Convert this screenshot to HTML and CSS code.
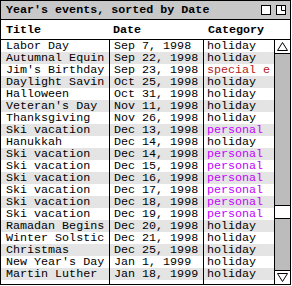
FILE: index.html
```html
<!DOCTYPE html>
<html lang="en">
<head>
  <meta charset="UTF-8" />
  <title>Year's events</title>
  <link rel="stylesheet" href="styles.css">
</head>
<body>

  <div class="window">
    <div class="title-bar">
      <span class="title-text">Year's events, sorted by Date</span>
      <div class="title-icons">
        <svg width="10" height="10" viewBox="0 0 10 10"><rect x="0.5" y="0.5" width="9" height="9" fill="#fff" stroke="#000"/></svg>
        <svg width="10" height="10" viewBox="0 0 10 10"><rect x="0.5" y="0.5" width="9" height="9" fill="#fff" stroke="#000"/><path d="M5.5 0.5V5.5H9.5" fill="none" stroke="#000"/></svg>
      </div>
    </div>

    <div class="header">
      <div class="hcell c-title">Title</div>
      <div class="hcell c-date">Date</div>
      <div class="hcell c-cat">Category</div>
    </div>

    <div class="body">
      <div class="list" id="list"></div>
      <div class="scrollbar">
        <div class="arrow up">
          <svg width="11" height="9" viewBox="0 0 11 9"><path d="M5.5 0.5L10.5 8.5H0.5Z" fill="none" stroke="#000"/></svg>
        </div>
        <div class="track">
          <div class="thumb"></div>
        </div>
        <div class="arrow down">
          <svg width="11" height="9" viewBox="0 0 11 9"><path d="M0.5 0.5H10.5L5.5 8.5Z" fill="none" stroke="#000"/></svg>
        </div>
      </div>
    </div>
  </div>

  <script>
    const events = [
      ["Labor Day", "Sep 7, 1998", "holiday"],
      ["Autumnal Equinox", "Sep 22, 1998", "holiday"],
      ["Jim's Birthday", "Sep 23, 1998", "special event"],
      ["Daylight Savings", "Oct 25, 1998", "holiday"],
      ["Halloween", "Oct 31, 1998", "holiday"],
      ["Veteran's Day", "Nov 11, 1998", "holiday"],
      ["Thanksgiving", "Nov 26, 1998", "holiday"],
      ["Ski vacation", "Dec 13, 1998", "personal"],
      ["Hanukkah", "Dec 14, 1998", "holiday"],
      ["Ski vacation", "Dec 14, 1998", "personal"],
      ["Ski vacation", "Dec 15, 1998", "personal"],
      ["Ski vacation", "Dec 16, 1998", "personal"],
      ["Ski vacation", "Dec 17, 1998", "personal"],
      ["Ski vacation", "Dec 18, 1998", "personal"],
      ["Ski vacation", "Dec 19, 1998", "personal"],
      ["Ramadan Begins", "Dec 20, 1998", "holiday"],
      ["Winter Solstice", "Dec 21, 1998", "holiday"],
      ["Christmas", "Dec 25, 1998", "holiday"],
      ["New Year's Day", "Jan 1, 1999", "holiday"],
      ["Martin Luther King Day", "Jan 18, 1999", "holiday"]
    ];

    // columns cut text to whole characters
    const TITLE_CHARS = 14;
    const CAT_CHARS = 9;

    const list = document.getElementById('list');

    events.forEach((ev, i) => {
      const row = document.createElement('div');
      row.className = 'row' + (i % 2 ? ' alt' : '');
      const cat = ev[2].replace(' ', '-');
      row.innerHTML =
        '<div class="cell c-title">' + ev[0].slice(0, TITLE_CHARS) + '</div>' +
        '<div class="cell c-date">' + ev[1] + '</div>' +
        '<div class="cell c-cat ' + cat + '">' + ev[2].slice(0, CAT_CHARS) + '</div>';
      list.appendChild(row);
    });

    // empty space below the last row keeps the column lines
    const filler = document.createElement('div');
    filler.className = 'row filler';
    filler.innerHTML = '<div class="cell c-title"></div><div class="cell c-date"></div><div class="cell c-cat"></div>';
    list.appendChild(filler);
  </script>
</body>
</html>
```

FILE: styles.css
```css
* {
  margin: 0;
  padding: 0;
  box-sizing: border-box;
}

body {
  background: #fff;
  font-family: 'Liberation Mono', monospace;
  font-size: 11.7px;
  color: #000;
}

.window {
  width: 291px;
  height: 285px;
  border: 1px solid #000;
  display: flex;
  flex-direction: column;
  background: #fff;
}

.title-bar {
  height: 19px;
  background: #c8c8c8;
  border-bottom: 1px solid #000;
  display: flex;
  align-items: center;
  justify-content: space-between;
  padding: 0 4px 0 5px;
}

.title-text {
  font-weight: bold;
}

.title-icons {
  display: flex;
  gap: 5px;
}

.title-icons svg {
  display: block;
}

.header {
  height: 20px;
  border-bottom: 1px solid #000;
  display: flex;
  align-items: center;
  font-weight: bold;
}

.hcell {
  padding-left: 5px;
}

.header .c-title { width: 108px; }
.header .c-date { width: 94px; padding-left: 4px; }

.body {
  flex: 1;
  display: flex;
  min-height: 0;
}

.list {
  width: 273px;
  display: flex;
  flex-direction: column;
}

.row {
  height: 12px;
  display: flex;
  line-height: 12px;
}

.row.alt {
  background: #e4e4e4;
}

.row.filler {
  flex: 1;
}

.cell {
  white-space: nowrap;
  overflow: hidden;
}

.cell.c-title {
  width: 109px;
  padding-left: 5px;
  border-right: 1px solid #000;
}

.cell.c-date {
  width: 94px;
  padding-left: 4px;
  border-right: 1px solid #000;
}

.cell.c-cat {
  width: 70px;
  padding-left: 3px;
}

.special-event { color: #b22222; }
.personal { color: #c400ff; }

.scrollbar {
  width: 16px;
  border-left: 1px solid #000;
  display: flex;
  flex-direction: column;
}

.arrow {
  height: 14px;
  background: #fff;
  display: flex;
  align-items: center;
  justify-content: center;
}

.arrow svg {
  display: block;
}

.arrow.up { border-bottom: 1px solid #000; }
.arrow.down { border-top: 1px solid #000; }

.track {
  flex: 1;
  background: #bcbcbc;
}

.thumb {
  margin-top: 151px;
  height: 14px;
  background: #fff;
  border-top: 1px solid #000;
  border-bottom: 1px solid #000;
}
```
